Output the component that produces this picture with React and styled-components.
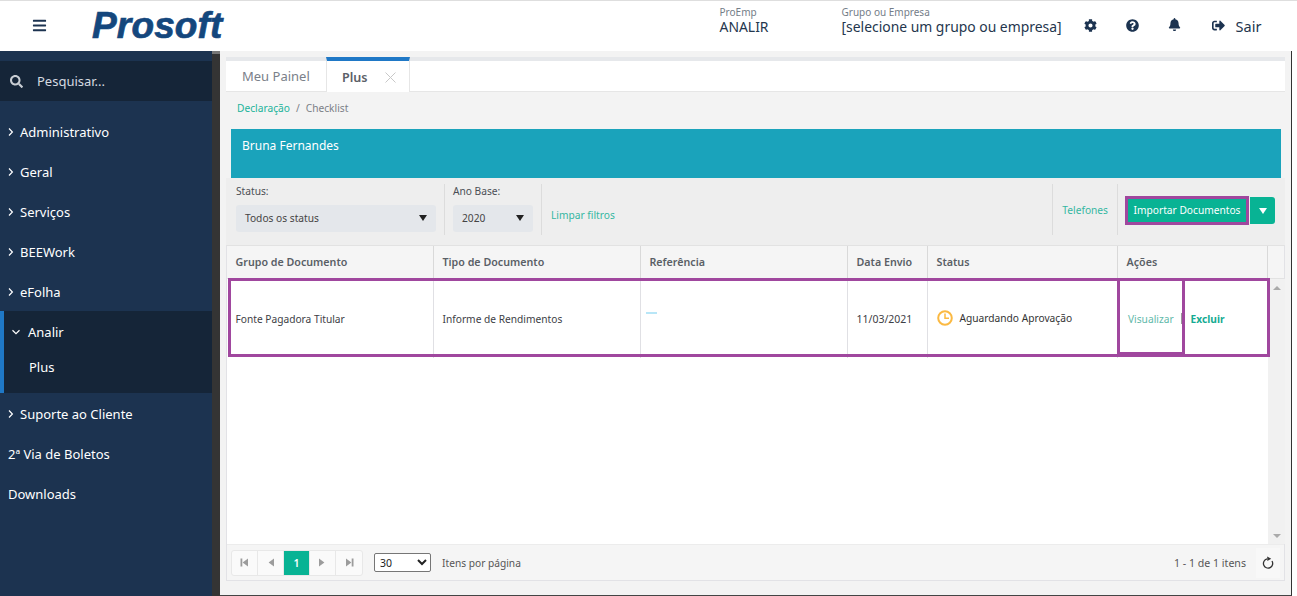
import React from 'react';
import styled, { createGlobalStyle } from 'styled-components';
import { FaBars, FaSearch, FaCog, FaQuestionCircle, FaBell, FaSignOutAlt } from 'react-icons/fa';

const Global = createGlobalStyle`
  html, body { margin: 0; padding: 0; background: #fff; }
  body { font-family: "Noto Sans", "Open Sans", sans-serif; overflow: hidden; }
  * { box-sizing: border-box; }
`;
const Page = styled.div`
  width: 1297px; height: 596px; display: flex; flex-direction: column; overflow: hidden;
  border-top: 1px solid #dedede;
`;
const Header = styled.header`
  height: 50px; flex: none; display: flex; align-items: center; background: #fff; color: #1c3350; padding-bottom: 1px;
`;
const Burger = styled.span`
  width: 92px; padding-left: 32px; font-size: 15px; display: flex; color: #1c3350;
`;
const Logo = styled.span`
  font-family: "Liberation Sans", sans-serif; font-weight: 700; font-style: italic; font-size: 37px;
  line-height: 40px; color: #14477d; -webkit-text-stroke: 0.7px #14477d; letter-spacing: 0.15px; margin-top: 1px;
`;
const Context = styled.div`
  display: flex; flex-direction: column; margin-left: ${p => p.$ml}px; margin-top: -8px;
`;
const ContextLabel = styled.span` font-size: 10px; line-height: 11px; color: #747d88; `;
const ContextValue = styled.span` font-size: 13.9px; line-height: 18px; color: #24364d; `;
const HeaderIcon = styled.span`
  display: flex; font-size: 13px; color: #1c3350; margin-left: ${p => p.$ml}px; margin-top: ${p => p.$mt || 0}px;
`;
const Exit = styled.span` font-size: 14.5px; color: #24364d; margin-left: 11px; `;

const Body = styled.div` flex: 1; display: flex; min-height: 0; `;
const Sidebar = styled.nav`
  width: 212px; flex: none; background: #1c3350; padding-top: 10px; color: #fff;
`;
const SideRail = styled.div`
  width: 8px; flex: none; background: #343434; border-top: 3px solid #777;
`;
const Search = styled.div`
  height: 40px; background: #152538; display: flex; align-items: center; padding-left: 10px; gap: 14px;
  font-size: 13px; color: #d5dae0; margin-bottom: 11px;
  svg { color: #c9ced4; font-size: 13px; }
`;
const NavItem = styled.div`
  height: 40px; display: flex; align-items: center; font-size: 13px; padding-left: ${p => p.$flat ? 8 : 7}px; gap: 5px; color: #fff;
`;
const NavOpen = styled.div`
  background: #152538; border-left: 4px solid #1f78c6; height: 82px; margin: -1px 0 1px;
`;
const OpenHead = styled.div`
  height: 42px; display: flex; align-items: center; font-size: 13px; padding-left: 8px; gap: 8px;
`;
const OpenChild = styled.div` height: 28px; display: flex; align-items: center; font-size: 13px; padding-left: 25px; `;

const Content = styled.main`
  width: 1072px; flex: none; background: #f3f3f3; padding: 6px 6px 14px; border-right: 1px solid #333;
  border-bottom: 1px solid #444; display: flex; flex-direction: column; position: relative;
`;
const Tabs = styled.div`
  height: 35px; flex: none; background: #fff; border-top: 4px solid #e6e8eb; border-bottom: 1px solid #e6e6e6; display: flex;
`;
const Tab = styled.div`
  display: flex; align-items: center; font-size: ${p => p.$active ? 12.6 : 13}px; height: ${p => p.$active ? 35 : 30}px;
  color: ${p => p.$active ? '#5b6068' : '#7a8089'}; font-weight: ${p => p.$active ? 600 : 400};
  width: ${p => p.$active ? 84 : 100}px; padding-left: ${p => p.$active ? 15 : 16}px; background: #fff;
  ${p => p.$active ? 'margin-top: -4px; border-top: 4px solid #1f78c6; border-right: 1px solid #e6e6e6; border-left: 1px solid #e6e6e6; padding-top: 1px;' : ''}
  gap: 17px;
`;
const Crumbs = styled.div`
  height: 33px; flex: none; display: flex; align-items: center; padding: 0 0 2px 11px; gap: 6px; font-size: 10.2px; color: #7b8087;
`;
const CrumbLink = styled.span` color: #22b39b; `;
const Banner = styled.div`
  height: 49px; flex: none; margin: 4px 4px 0 5px; background: #1aa3bb; color: #fff; font-size: 12px; padding: 8px 11px;
  line-height: 18px;
`;
const Toolbar = styled.div`
  height: 67px; flex: none; background: #eee; display: flex; align-items: center; padding: 0 0 4px 10px;
`;
const Field = styled.div`
  display: flex; flex-direction: column; height: 51px; font-size: 10.2px; color: #4b4f55; line-height: 14px; gap: 7px;
`;
const FakeSelect = styled.div`
  width: ${p => p.$w}px; height: 27px; background: #e4e7eb; border-radius: 3px; display: flex; align-items: center;
  justify-content: space-between; padding: 0 9px 2px 9px; font-size: 10.2px; color: #444;
`;
const Caret = styled.span`
  width: 0; height: 0; border-left: 4px solid transparent; border-right: 4px solid transparent; border-top: 6px solid ${p => p.$c || '#222'};
`;
const Divider = styled.div`
  width: 1px; height: 51px; background: #dcdcdc; margin: 0 ${p => p.$r}px 0 ${p => p.$l}px;
`;
const ToolLink = styled.span` font-size: 10.2px; color: #35b7a2; margin-top: ${p => p.$mt}px; `;
const Spacer = styled.div` flex: 1; `;
const ImportBtn = styled.div`
  width: 124px; height: 27px; margin-top: 2px; padding-bottom: 2px; background: #08b394; color: #fff; font-size: 10.2px; display: flex; align-items: center; justify-content: center;
  border-radius: 2px 0 0 2px;
`;
const ImportCaret = styled.div`
  width: 25px; height: 27px; margin: 2px 10px 0 1px; background: #08b394; border-radius: 0 3px 3px 0; display: flex; align-items: center; justify-content: center;
`;
const GridWrap = styled.div`
  flex: 1; min-height: 0; display: flex; flex-direction: column; background: #fff; border: 1px solid #e2e2e6; border-top: 1px solid #e2e2e2;
`;
const COLS = '207px 207px 207px 80px 190px 150px 1fr';
const HeadRow = styled.div`
  height: 33px; flex: none; display: grid; grid-template-columns: ${COLS}; background: #f5f5f5; border-bottom: 1px solid #e2e2e2;
`;
const HeadCell = styled.div`
  display: flex; align-items: center; padding-left: 8.5px; font-size: 10.7px; font-weight: 600; color: #5a5f66; border-right: 1px solid #d9d9d9;
  &:last-child { border-right: 0; }
`;
const GridBody = styled.div` flex: 1; min-height: 0; display: flex; `;
const Rows = styled.div` flex: 1; `;
const Row = styled.div` height: 79px; display: grid; grid-template-columns: 207px 207px 207px 80px 190px 150px; `;
const Cell = styled.div`
  display: flex; align-items: center; padding-left: ${p => p.$pl || 8.5}px; font-size: ${p => p.$fs || 10.2}px; color: #3d4045; border-right: 1px solid #e0e0e4; gap: 7px;
  &:last-child { border-right: 0; }
`;
const Dash = styled.span` width: 11px; height: 2px; background: #b8e6f7; margin-top: -12px; `;
const Scroll = styled.div`
  width: 17px; flex: none; background: #f1f1f1; display: flex; flex-direction: column; justify-content: space-between; align-items: center; padding: 7px 0 6px;
`;
const Arrow = styled.span`
  width: 0; height: 0; border-left: 4px solid transparent; border-right: 4px solid transparent;
  ${p => p.$up ? 'border-bottom: 4px solid #aaa;' : 'border-top: 4px solid #aaa;'}
`;
const StatusText = styled.span` margin-top: -2px; color: #333; `;
const ActionLink = styled.span`
  color: ${p => p.$bold ? '#14ab92' : '#5fb9aa'}; font-weight: ${p => p.$bold ? 700 : 400}; font-size: 10.2px; margin-left: ${p => p.$bold ? 2 : 0}px;
`;
const Sep = styled.span` width: 1px; height: 11px; background: #9a9a9a; `;
const Footer = styled.div`
  height: 36px; flex: none; background: #f5f5f5; border-top: 1px solid #ececec; display: flex; align-items: center; padding: 0 4px;
  font-size: 10.2px; color: #555;
`;
const Pager = styled.div`
  display: flex; height: 26px; border: 1px solid #e8e8e8; border-radius: 3px; background: #fafafa; overflow: hidden;
`;
const PageBtn = styled.div`
  width: 26px; display: flex; align-items: center; justify-content: center; border-right: 1px solid #e8e8e8;
  background: ${p => p.$on ? '#08b394' : 'transparent'}; color: #fff; font-size: 10.5px; font-weight: 600;
  &:last-child { border-right: 0; }
`;
const SizeSelect = styled.select`
  width: 57px; height: 19px; margin: 0 11px; font: 10.5px "Noto Sans", sans-serif; background: #fff; color: #222; border: 1px solid #767676; border-radius: 2px; padding: 0 0 0 1px;
`;
const Count = styled.span` font-size: 10.6px; `;
const Refresh = styled.div`
  width: 24px; height: 30px; margin-left: 10px; background: #f8f8f8; display: flex; align-items: center; justify-content: center;
`;
const Mark = styled.div`
  position: absolute; left: ${p => p.$x}px; top: ${p => p.$y}px; width: ${p => p.$w}px; height: ${p => p.$h}px; border: 3px solid #a0479e; pointer-events: none;
`;

const PagerIcon = ({ dir, end }) => (
  <svg width="9" height="9" viewBox="0 0 9 9" style={{ transform: dir === 'l' ? 'none' : 'scaleX(-1)' }}>
    {end && <rect x="0.5" y="0.5" width="1.8" height="8" fill="#9c9c9c" />}
    <path d="M8 0.5 V8.5 L2.6 4.5 Z" fill="#9c9c9c" />
  </svg>
);
const Chevron = ({ down }) => (
  <svg width="8" height="8" viewBox="0 0 8 8" fill="none" stroke="#fff" strokeWidth="1.2" style={{ flex: 'none' }}>
    {down ? <path d="M0.5 2.2 L4 5.6 L7.5 2.2" /> : <path d="M2 0.5 L5.4 4 L2 7.5" />}
  </svg>
);
const Clock = () => (
  <svg width="16" height="16" viewBox="0 0 16 16" fill="none" stroke="#fbb942" strokeWidth="2" style={{ flex: 'none', marginTop: '-1px' }}>
    <circle cx="8" cy="8" r="6.8" />
    <path d="M8 3.6 V8.2 H12" strokeWidth="1.5" />
  </svg>
);
const RefreshIcon = () => (
  <svg width="12" height="13" viewBox="0 0 13 14" fill="none" stroke="#333" strokeWidth="1.4">
    <path d="M10.8 5.4 A5 5 0 1 1 5.4 3.2" />
    <path d="M5.6 0.4 L10 3 L5.8 5.4 Z" fill="#333" stroke="none" />
  </svg>
);
const Close = () => (
  <svg width="11" height="11" viewBox="0 0 11 11" stroke="#c8c8c8" strokeWidth="1"><path d="M0.5 0.5 L10.5 10.5 M10.5 0.5 L0.5 10.5" /></svg>
);

const nav = ['Administrativo', 'Geral', 'Serviços', 'BEEWork', 'eFolha'];

export default function App() {
  return (
    <Page>
      <Global />
      <Header>
        <Burger><FaBars /></Burger>
        <Logo>Prosoft</Logo>
        <Context $ml={497}><ContextLabel>ProEmp</ContextLabel><ContextValue>ANALIR</ContextValue></Context>
        <Context $ml={73}><ContextLabel>Grupo ou Empresa</ContextLabel><ContextValue>[selecione um grupo ou empresa]</ContextValue></Context>
        <HeaderIcon $ml={22}><FaCog /></HeaderIcon>
        <HeaderIcon $ml={29}><FaQuestionCircle /></HeaderIcon>
        <HeaderIcon $ml={29} $mt={-2}><FaBell /></HeaderIcon>
        <HeaderIcon $ml={31}><FaSignOutAlt /></HeaderIcon>
        <Exit>Sair</Exit>
      </Header>
      <Body>
        <Sidebar>
          <Search><FaSearch /><span>Pesquisar...</span></Search>
          {nav.map(n => <NavItem key={n}><Chevron />{n}</NavItem>)}
          <NavOpen>
            <OpenHead><Chevron down />Analir</OpenHead>
            <OpenChild>Plus</OpenChild>
          </NavOpen>
          <NavItem><Chevron />Suporte ao Cliente</NavItem>
          <NavItem $flat>2ª Via de Boletos</NavItem>
          <NavItem $flat>Downloads</NavItem>
        </Sidebar>
        <SideRail />
        <Content>
          <Tabs>
            <Tab>Meu Painel</Tab>
            <Tab $active>Plus<Close /></Tab>
          </Tabs>
          <Crumbs><CrumbLink>Declaração</CrumbLink><span>/</span><span>Checklist</span></Crumbs>
          <Banner>Bruna Fernandes</Banner>
          <Toolbar>
            <Field>Status:<FakeSelect $w={200}>Todos os status<Caret /></FakeSelect></Field>
            <Divider $l={8} $r={8} />
            <Field>Ano Base:<FakeSelect $w={80}>2020<Caret /></FakeSelect></Field>
            <Divider $l={8} $r={9} />
            <ToolLink $mt={11}>Limpar filtros</ToolLink>
            <Spacer />
            <Divider $l={0} $r={9} />
            <ToolLink $mt={0}>Telefones</ToolLink>
            <Divider $l={9} $r={7} />
            <ImportBtn>Importar Documentos</ImportBtn>
            <ImportCaret><Caret $c="#fff" /></ImportCaret>
          </Toolbar>
          <GridWrap>
            <HeadRow>
              {['Grupo de Documento', 'Tipo de Documento', 'Referência', 'Data Envio', 'Status', 'Ações', ''].map((h, i) => <HeadCell key={i}>{h}</HeadCell>)}
            </HeadRow>
            <GridBody>
              <Rows>
                <Row>
                  <Cell>Fonte Pagadora Titular</Cell>
                  <Cell>Informe de Rendimentos</Cell>
                  <Cell $pl={5}><Dash /></Cell>
                  <Cell $fs={10.5}>11/03/2021</Cell>
                  <Cell><Clock /><StatusText>Aguardando Aprovação</StatusText></Cell>
                  <Cell $pl={10}><ActionLink>Visualizar</ActionLink><Sep /><ActionLink $bold>Excluir</ActionLink></Cell>
                </Row>
              </Rows>
              <Scroll><Arrow $up /><Arrow /></Scroll>
            </GridBody>
            <Footer>
              <Pager>
                <PageBtn><PagerIcon dir="l" end /></PageBtn>
                <PageBtn><PagerIcon dir="l" /></PageBtn>
                <PageBtn $on>1</PageBtn>
                <PageBtn><PagerIcon dir="r" /></PageBtn>
                <PageBtn><PagerIcon dir="r" end /></PageBtn>
              </Pager>
              <SizeSelect defaultValue="30"><option>30</option></SizeSelect>
              <span>Itens por página</span>
              <Spacer />
              <Count>1 - 1 de 1 itens</Count>
              <Refresh><RefreshIcon /></Refresh>
            </Footer>
          </GridWrap>
          <Mark $x={905} $y={145} $w={124} $h={29} />
          <Mark $x={8} $y={227} $w={1042} $h={79} />
          <Mark $x={897} $y={227} $w={68} $h={77} />
        </Content>
      </Body>
    </Page>
  );
}
